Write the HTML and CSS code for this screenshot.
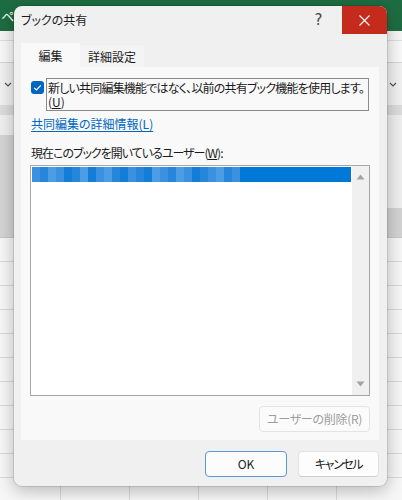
FILE: index.html
```html
<!DOCTYPE html>
<html lang="ja">
<head>
<meta charset="utf-8">
<title>ブックの共有</title>
<link rel="stylesheet" href="styles.css">
</head>
<body>
<div class="backdrop">
  <div class="xl-green"><span class="xl-char">ペ</span></div>
  <div class="xl-r1"></div>
  <div class="xl-r2"></div>
  <div class="xl-r3">
    <svg class="chev" width="8" height="5" viewBox="0 0 8 5"><path d="M1 1 L4 4 L7 1" fill="none" stroke="#555" stroke-width="1.2"/></svg>
    <svg class="chev" width="8" height="5" viewBox="0 0 8 5"><path d="M1 1 L4 4 L7 1" fill="none" stroke="#555" stroke-width="1.2"/></svg>
  </div>
  <div class="xl-r4"></div>
  <div class="xl-r5">
    <div class="xl-left5"></div>
    <div class="xl-right5"><div class="xl-right5a"></div><div class="xl-right5b"></div></div>
  </div>
  <div class="xl-grid"></div>
</div>

<div class="dialog">
  <div class="titlebar">
    <div class="title">ブックの共有</div>
    <div class="help">?</div>
    <div class="close">
      <svg width="11" height="11" viewBox="0 0 11 11"><path d="M0.5 0.5 L10.5 10.5 M10.5 0.5 L0.5 10.5" stroke="#fff" stroke-width="1.1"/></svg>
    </div>
  </div>
  <div class="content">
    <div class="tabs">
      <div class="tab tab-active">編集</div>
      <div class="tab">詳細設定</div>
    </div>
    <div class="panel">
      <div class="check-row">
        <div class="checkbox">
          <svg width="13" height="13" viewBox="0 0 13 13"><path d="M3.2 6.8 L5.4 9 L9.8 4.4" fill="none" stroke="#fff" stroke-width="1.2"/></svg>
        </div>
        <div class="check-label">
          <div class="cl-line cl-first">新しい共同編集機能ではなく、以前の共有ブック機能を使用します。</div>
          <div class="cl-line">(<u>U</u>)</div>
        </div>
      </div>
      <div class="link">共同編集の詳細情報(L)</div>
      <div class="label">現在このブックを開いているユーザー(<u>W</u>):</div>
      <div class="listbox">
        <div class="list-items">
          <div class="sel-row">
            <span class="m m1"></span><span class="m m2"></span><span class="m m3"></span><span class="m m1"></span><span class="m m4"></span><span class="m m2"></span><span class="m m3"></span><span class="m m4"></span><span class="m m1"></span><span class="m m3"></span><span class="m m2"></span><span class="m m4"></span><span class="m m1"></span><span class="m m2"></span><span class="m m4"></span><span class="m m3"></span><span class="m m1"></span><span class="m m2"></span><span class="m m3"></span><span class="m m1"></span><span class="m m4"></span><span class="m m2"></span><span class="m m1"></span><span class="m m3"></span><span class="m m2"></span><span class="m m1"></span>
          </div>
        </div>
        <div class="scrollbar">
          <svg width="9" height="6" viewBox="0 0 9 6"><path d="M0.5 5.5 L4.5 0.5 L8.5 5.5 Z" fill="#a3a3a3"/></svg>
          <svg width="9" height="6" viewBox="0 0 9 6"><path d="M0.5 0.5 L4.5 5.5 L8.5 0.5 Z" fill="#a3a3a3"/></svg>
        </div>
      </div>
      <div class="remove-row">
        <div class="btn btn-disabled">ユーザーの削除(R)</div>
      </div>
    </div>
    <div class="footer">
      <div class="btn btn-ok">OK</div>
      <div class="btn btn-cancel">キャンセル</div>
    </div>
  </div>
</div>
</body>
</html>
```

FILE: styles.css
```css
html, body {
  margin: 0;
  padding: 0;
  width: 402px;
  height: 500px;
  overflow: hidden;
  font-family: "Noto Sans CJK JP", "Noto Sans", sans-serif;
  font-feature-settings: "palt";
  font-size: 12px;
  color: #1b1b1b;
}

.backdrop {
  width: 402px;
  height: 500px;
  display: flex;
  flex-direction: column;
  background: #f4f4f4;
}

.xl-green {
  height: 31px;
  background: #1e6d42;
  display: flex;
  align-items: center;
  padding-left: 1px;
}

.xl-char {
  color: #fff;
  font-size: 13px;
  line-height: 13px;
  margin-top: -1px;
}

.xl-r1 {
  height: 9px;
  background: #f6f6f6;
  border-bottom: 1px solid #dedede;
}

.xl-r2 {
  height: 21px;
  background: #f9f9f9;
  border-bottom: 1px solid #d6d6d6;
}

.xl-r3 {
  height: 42px;
  background: #f1f1f1;
  display: flex;
  justify-content: space-between;
  align-items: center;
  padding: 0 5px 0 4px;
}

.xl-r4 {
  height: 10px;
  background: #dcdcdc;
}

.xl-r5 {
  height: 123px;
  display: flex;
  justify-content: space-between;
}

.xl-left5 {
  width: 14px;
  background: linear-gradient(#f0f0f0 0 20px, #d5d5d5 20px 100%);
  border-bottom: 1px solid #c8c8c8;
}

.xl-right5 {
  width: 15px;
  display: flex;
  flex-direction: column;
}

.xl-right5a {
  height: 93px;
  background: #efefef;
}

.xl-right5b {
  flex: 1;
  background: #d3d3d3;
  border-bottom: 1px solid #c8c8c8;
}

.xl-grid {
  flex: 1;
  background-color: #f7f7f7;
  background-image:
    repeating-linear-gradient(to bottom, transparent 0 23px, #dadada 23px 24px),
    linear-gradient(to right, transparent 0 68px, #dadada 68px 69px);
  background-size: 100% 100%, 69px 100%;
  background-position: 0 0, -8px 0;
}

.dialog {
  position: absolute;
  left: 14px;
  top: 6px;
  width: 373px;
  height: 480px;
  background: #f0f0f0;
  border-radius: 8px;
  overflow: hidden;
  box-shadow: 0 0 0 1px rgba(0, 0, 0, 0.10), 0 4px 18px rgba(0, 0, 0, 0.28);
  display: flex;
  flex-direction: column;
}

.titlebar {
  height: 28px;
  display: flex;
  align-items: center;
  flex-shrink: 0;
}

.title {
  flex: 1;
  padding-left: 7px;
  font-size: 12px;
  line-height: 28px;
}

.help {
  width: 45px;
  height: 28px;
  display: flex;
  align-items: center;
  justify-content: center;
  font-family: "DejaVu Sans", sans-serif;
  font-size: 15px;
  color: #444;
  padding-right: 2px;
  box-sizing: border-box;
}

.close {
  width: 45px;
  height: 28px;
  background: #c42b1c;
  display: flex;
  align-items: center;
  justify-content: center;
}

.content {
  flex: 1;
  padding: 9px 8px 0 7px;
  display: flex;
  flex-direction: column;
}

.tabs {
  display: flex;
  align-items: flex-end;
  height: 24px;
}

.tab {
  width: 64px;
  height: 22px;
  background: #f4f4f4;
  display: flex;
  align-items: center;
  justify-content: center;
  line-height: 14px;
  padding-top: 1px;
  box-sizing: border-box;
}

.tab-active {
  width: 59px;
  height: 24px;
  background: #f9f9f9;
  padding-top: 2px;
}

.panel {
  height: 373px;
  box-sizing: border-box;
  background: #f9f9f9;
  padding: 11px 9px 8px 9px;
  display: flex;
  flex-direction: column;
}

.check-row {
  display: flex;
  align-items: flex-start;
  height: 33px;
}

.checkbox {
  width: 13px;
  height: 13px;
  margin: 3px 2px 0 1px;
  background: #0067c0;
  border-radius: 3px;
  display: flex;
}

.check-label {
  width: 323px;
  height: 33px;
  box-sizing: border-box;
  border: 1px solid #8c8c8c;
  padding: 2px 0 0 1px;
  overflow: hidden;
}

.cl-line {
  height: 14px;
  line-height: 14px;
  white-space: nowrap;
}

.cl-first {
  letter-spacing: -0.8px;
}

.link {
  margin-top: 6px;
  margin-left: 1px;
  line-height: 14px;
  color: #0067c0;
  text-decoration: underline;
  text-underline-offset: 2px;
}

.label {
  margin-top: 15px;
  margin-left: 1px;
  line-height: 14px;
  letter-spacing: -1px;
}

.listbox {
  margin-top: 5px;
  height: 231px;
  box-sizing: border-box;
  border: 1px solid #a6a6a6;
  background: #fff;
  display: flex;
  padding: 0 0 0 1px;
}

.list-items {
  flex: 1;
  padding-top: 1px;
}

.sel-row {
  height: 15px;
  background: #0078d7;
  display: flex;
}

.m {
  width: 8px;
  height: 15px;
}

.m1 { background: #3b90df; }
.m2 { background: #2586db; }
.m3 { background: #4d9de4; }
.m4 { background: #137ed8; }

.scrollbar {
  width: 17px;
  margin-left: 1px;
  background: #f0f0f0;
  display: flex;
  flex-direction: column;
  align-items: center;
  justify-content: space-between;
  padding: 8px 0 8px 0;
  box-sizing: border-box;
}

.remove-row {
  margin-top: 10px;
  display: flex;
  justify-content: flex-end;
}

.btn {
  height: 26px;
  box-sizing: border-box;
  border-radius: 4px;
  display: flex;
  align-items: center;
  justify-content: center;
  line-height: 14px;
}

.btn-disabled {
  width: 111px;
  background: #fbfbfb;
  border: 1px solid #e4e4e4;
  color: #9d9d9d;
  letter-spacing: -0.3px;
}

.footer {
  margin-top: 11px;
  display: flex;
  justify-content: flex-end;
  gap: 11px;
}

.btn-ok {
  width: 82px;
  background: #fcfcfc;
  border: 1px solid #5a98d8;
}

.btn-cancel {
  width: 81px;
  background: #fdfdfd;
  border: 1px solid #e2e2e2;
  border-bottom-color: #cfcfcf;
  letter-spacing: -1.4px;
}
```
